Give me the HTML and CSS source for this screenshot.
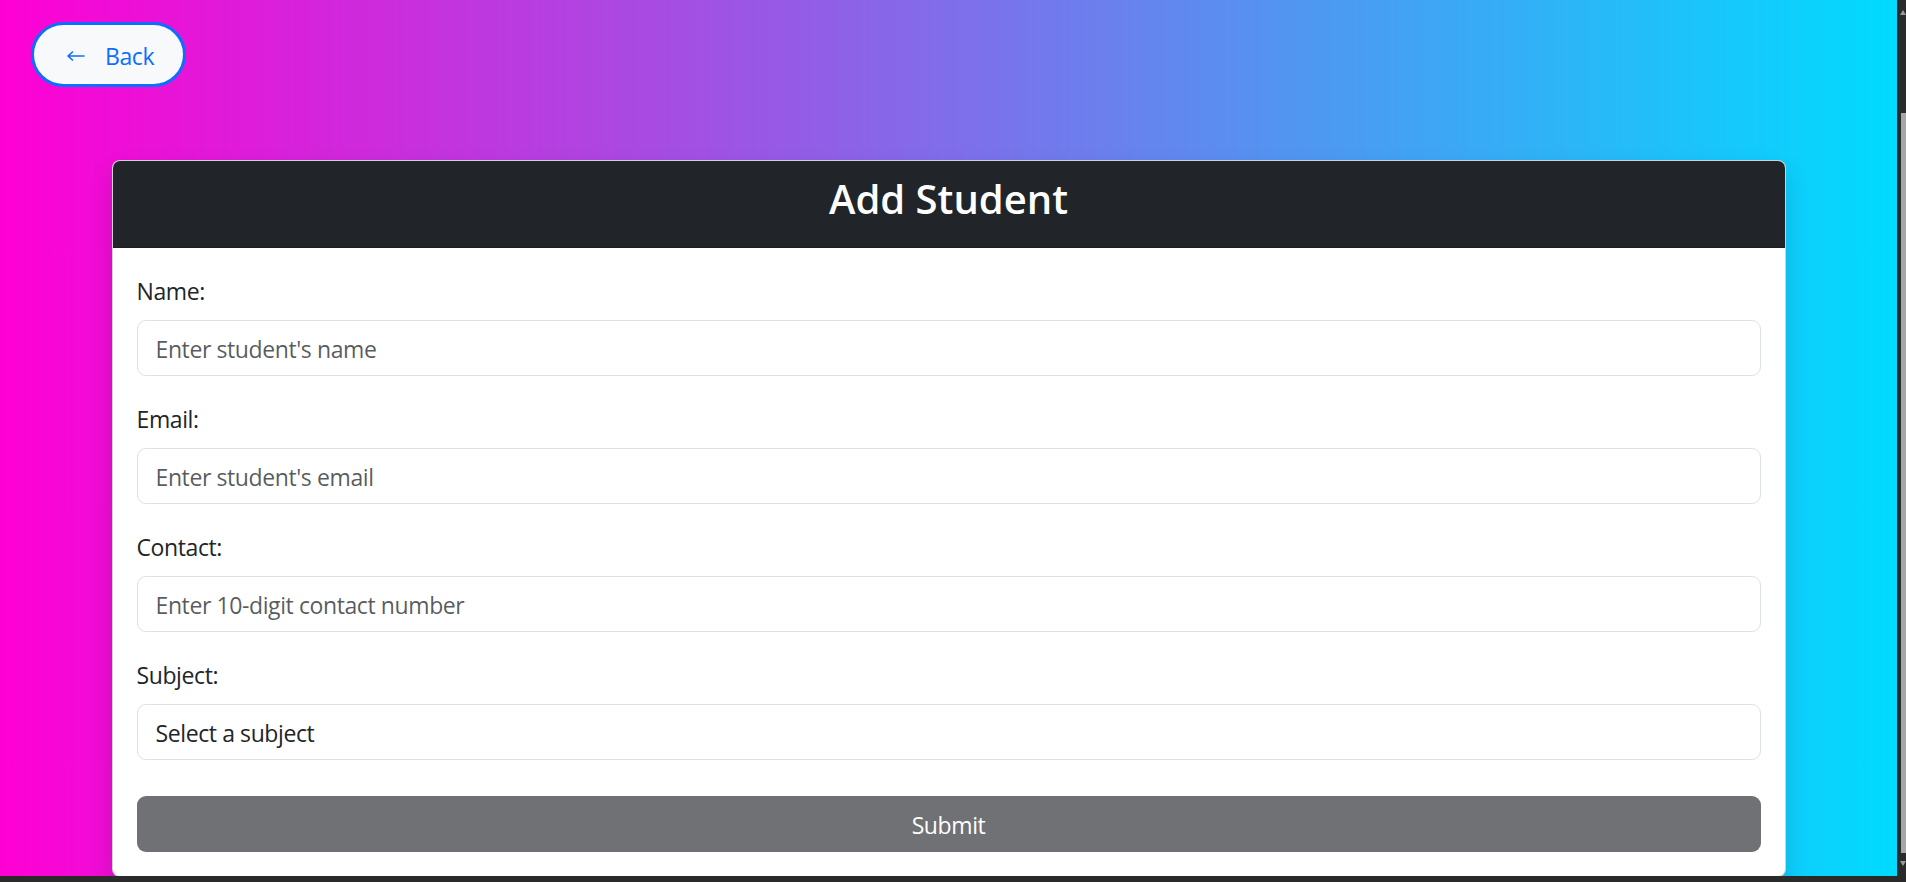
FILE: index.html
```html
<!DOCTYPE html>
<html lang="en">
<head>
<meta charset="utf-8">
<title>Add Student</title>
<link rel="stylesheet" href="styles.css">
</head>
<body>
<div class="window">
  <div class="viewport">
    <main class="page">
      <div class="topbar">
        <button class="back-btn" type="button">
          <svg class="back-arrow" width="18" height="10" viewBox="0 0 18 10" aria-hidden="true">
            <path d="M1 5H17M5.5 1L1 5L5.5 9" fill="none" stroke="#0d6efd" stroke-width="1.6" stroke-linecap="round" stroke-linejoin="round"/>
          </svg>
          <span>Back</span>
        </button>
      </div>
      <div class="container">
        <div class="card">
          <div class="card-header">
            <h3 class="card-title">Add Student</h3>
          </div>
          <form class="card-body">
            <div class="field">
              <label class="label" for="name">Name:</label>
              <input class="control" id="name" type="text" placeholder="Enter student's name">
            </div>
            <div class="field">
              <label class="label" for="email">Email:</label>
              <input class="control" id="email" type="email" placeholder="Enter student's email">
            </div>
            <div class="field">
              <label class="label" for="contact">Contact:</label>
              <input class="control" id="contact" type="text" placeholder="Enter 10-digit contact number">
            </div>
            <div class="field">
              <label class="label" for="subject">Subject:</label>
              <select class="control select" id="subject">
                <option>Select a subject</option>
              </select>
            </div>
            <button class="submit" type="button">Submit</button>
          </form>
        </div>
      </div>
    </main>
    <div class="scrollbar">
      <div class="sb-arrow-up"></div>
      <div class="sb-thumb"></div>
      <div class="sb-arrow-down"></div>
    </div>
  </div>
  <div class="bottom-strip"></div>
</div>
</body>
</html>
```
FILE: styles.css
```css
* { box-sizing: border-box; }

html, body {
  margin: 0;
  padding: 0;
  height: 882px;
  overflow: hidden;
}

body {
  font-family: "Segoe UI", "Open Sans", "Noto Sans", sans-serif;
  color: #212529;
  background: #2b2b2b;
}

.window {
  display: flex;
  flex-direction: column;
  height: 882px;
}

.viewport {
  display: flex;
  height: 876px;
}

.page {
  flex: 0 0 1897px;
  height: 876px;
  overflow: hidden;
  background: linear-gradient(90deg, #ff00d4 0%, #00dbff 100%);
}

.topbar {
  padding: 22px 0 0 31px;
}

.back-btn {
  display: inline-flex;
  align-items: center;
  gap: 20px;
  height: 65px;
  padding: 3px 29px 0 33px;
  border: 3px solid #0d6efd;
  border-radius: 40px;
  background: #f8f9fa;
  color: #0d6efd;
  font-family: inherit;
  font-size: 23px;
  letter-spacing: -0.4px;
  line-height: 36px;
  cursor: pointer;
}

.back-arrow { display: block; margin-top: 0; }

.container {
  width: 1674px;
  margin: 73px auto 0;
}

.card {
  background: #fff;
  border: 1px solid rgba(0, 0, 0, 0.18);
  border-radius: 8px;
  overflow: hidden;
  box-shadow: 0 12px 24px rgba(0, 0, 0, 0.15);
}

.card-header {
  background: #212529;
  padding: 13px 24px 11px;
  border-bottom: 1px solid rgba(0, 0, 0, 0.18);
}

.card-title {
  margin: 0 0 12px;
  color: #fff;
  text-align: center;
  font-size: 40px;
  line-height: 50px;
  font-weight: 600;
}

.card-body {
  display: flex;
  flex-direction: column;
  padding: 24px;
  margin: 0;
}

.field {
  margin-bottom: 24px;
}

.label {
  display: block;
  font-size: 23px;
  letter-spacing: -0.4px;
  line-height: 36px;
  padding-top: 1px;
  margin-bottom: 11px;
  color: #212529;
}

.control {
  display: block;
  width: 100%;
  height: 56px;
  padding: 2px 18px 0;
  border: 1px solid #dee2e6;
  border-radius: 9px;
  background: #fff;
  font-family: inherit;
  font-size: 23px;
  letter-spacing: -0.4px;
  color: #212529;
  outline: none;
}

.control::placeholder {
  color: rgba(33, 37, 41, 0.75);
}

.select {
  appearance: none;
  -webkit-appearance: none;
}

.submit {
  display: block;
  width: 100%;
  height: 56px;
  margin-top: 12px;
  padding-top: 3px;
  border: none;
  border-radius: 9px;
  background: #707175;
  color: #fff;
  font-family: inherit;
  font-size: 23px;
  letter-spacing: -0.4px;
}

.scrollbar {
  flex: 0 0 9px;
  display: flex;
  flex-direction: column;
  align-items: flex-end;
  background: #2b2b2b;
  padding-top: 10px;
}

.sb-arrow-up {
  width: 0;
  height: 0;
  border-left: 3px solid transparent;
  border-right: 3px solid transparent;
  border-bottom: 5px solid #9a9a9a;
}

.sb-thumb {
  width: 5px;
  height: 740px;
  margin-top: 98px;
  background: #a6a6a6;
}

.sb-arrow-down {
  width: 0;
  height: 0;
  margin-top: 8px;
  border-left: 3px solid transparent;
  border-right: 3px solid transparent;
  border-top: 5px solid #9a9a9a;
}

.bottom-strip {
  height: 6px;
  background: #2b2a2a;
}
```
